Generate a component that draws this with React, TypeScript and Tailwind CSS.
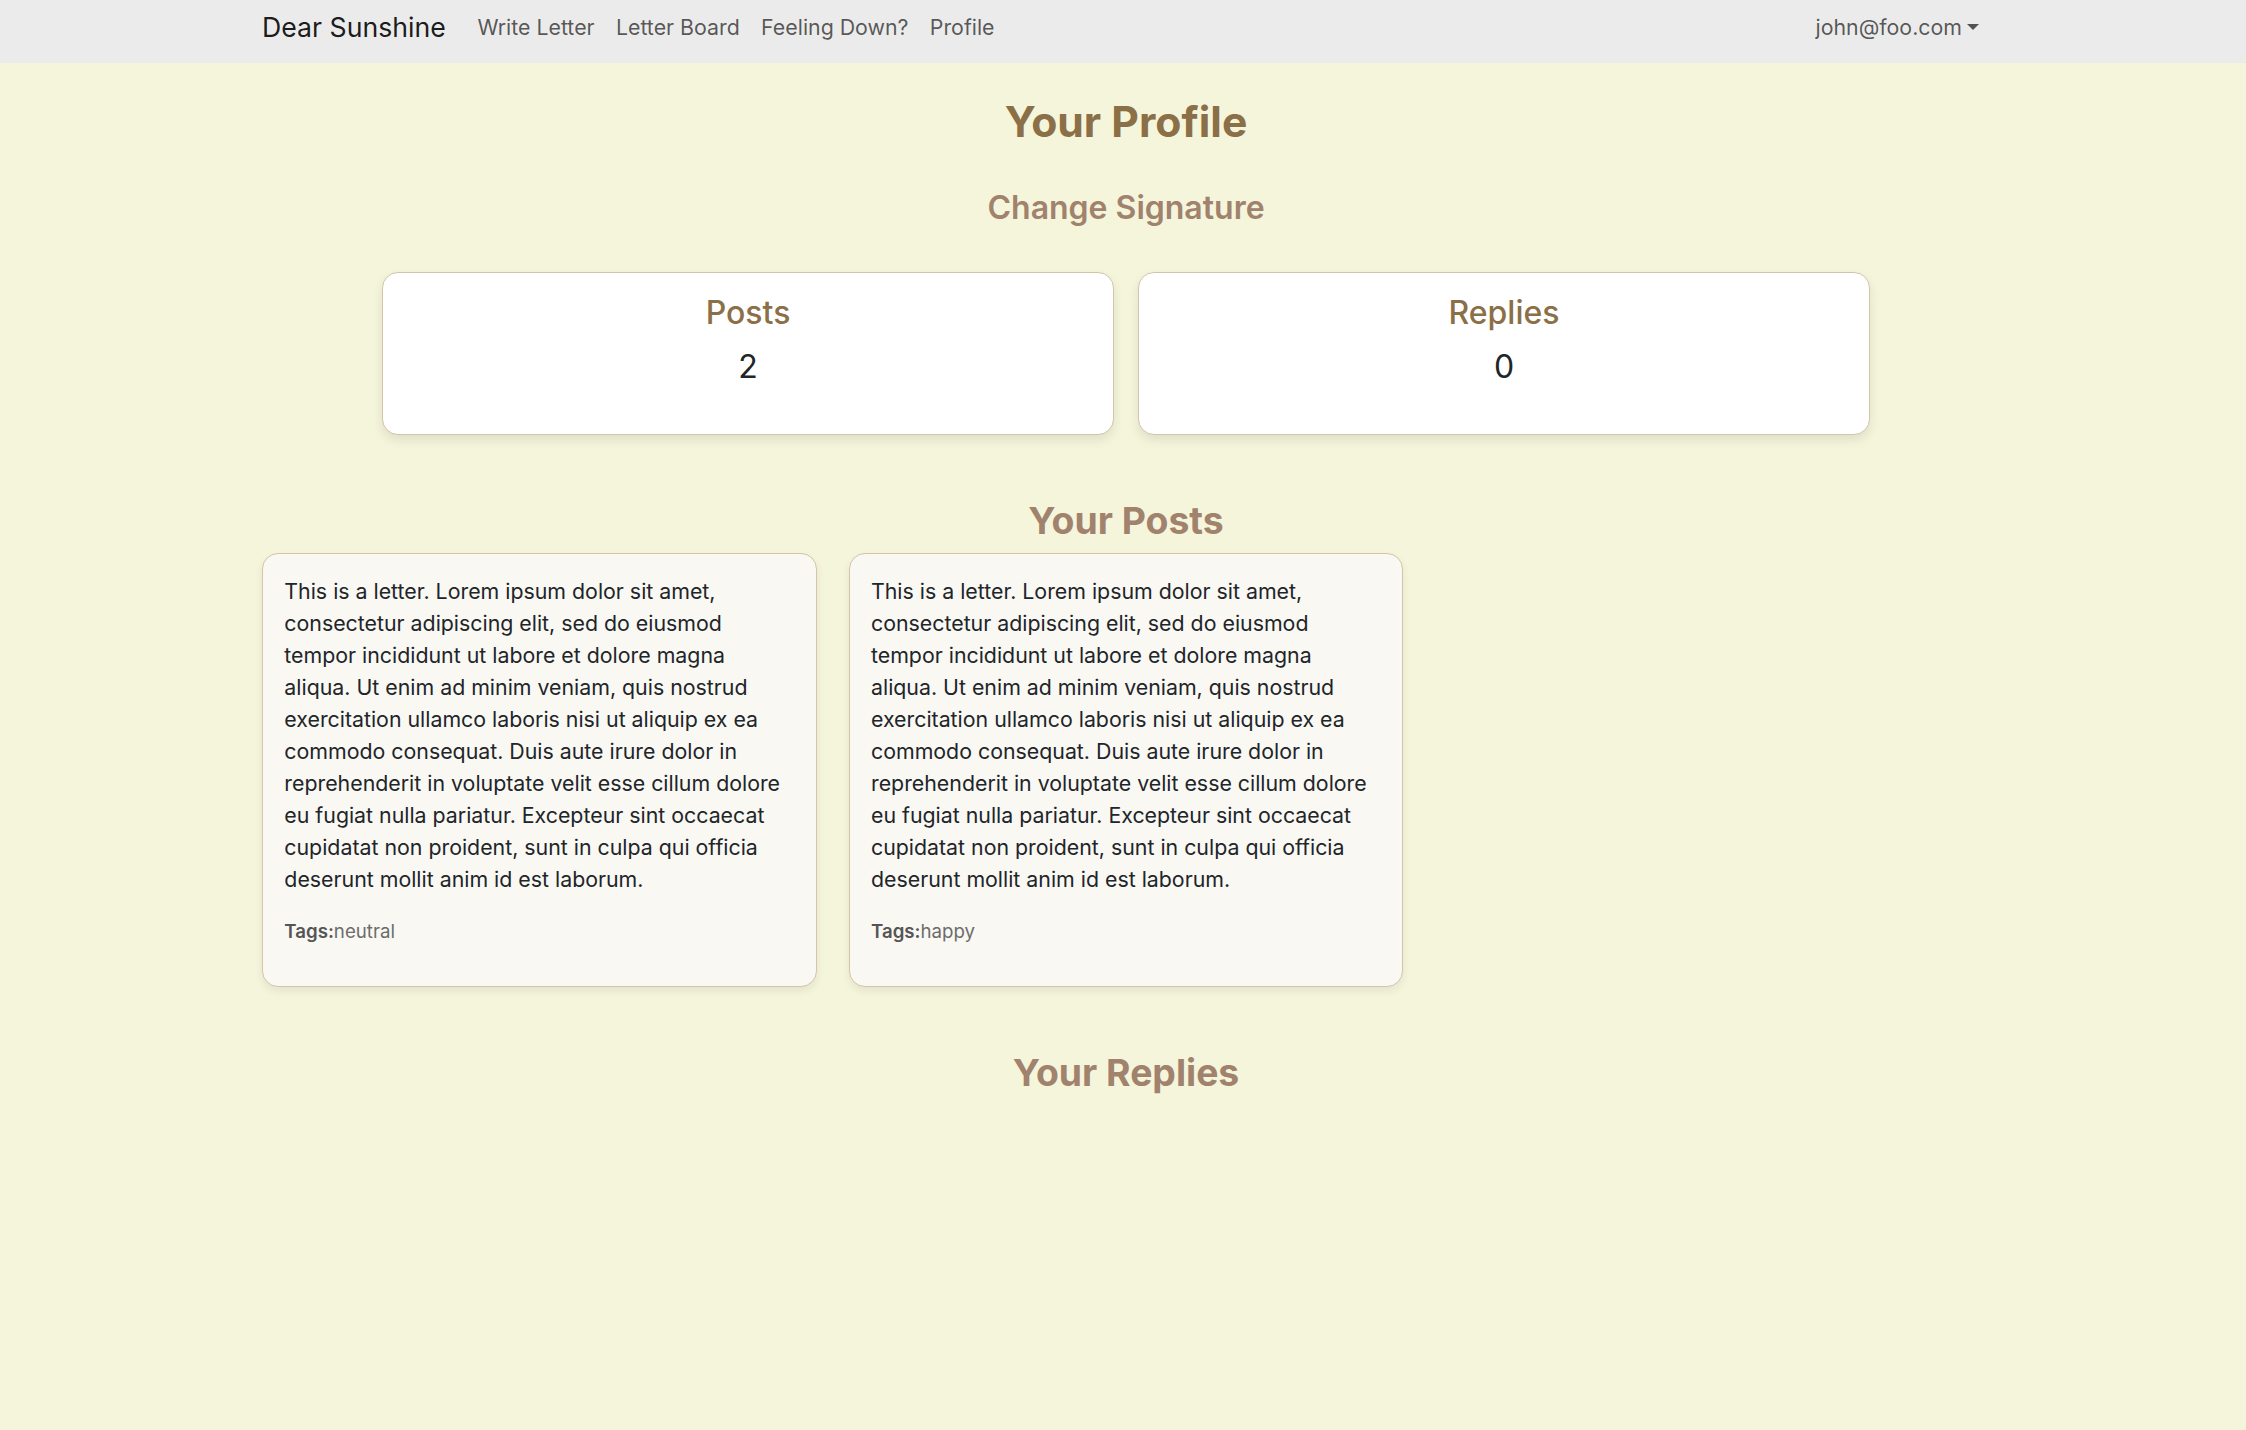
import React from 'react';

const LETTER =
  'This is a letter. Lorem ipsum dolor sit amet, consectetur adipiscing elit, sed do eiusmod tempor incididunt ut labore et dolore magna aliqua. Ut enim ad minim veniam, quis nostrud exercitation ullamco laboris nisi ut aliquip ex ea commodo consequat. Duis aute irure dolor in reprehenderit in voluptate velit esse cillum dolore eu fugiat nulla pariatur. Excepteur sint occaecat cupidatat non proident, sunt in culpa qui officia deserunt mollit anim id est laborum.';

const POSTS = [
  { id: 1, body: LETTER, tag: 'neutral' },
  { id: 2, body: LETTER, tag: 'happy' },
];

const STATS = [
  { label: 'Posts', value: 2 },
  { label: 'Replies', value: 0 },
];

function Navbar() {
  return (
    <nav className="h-[63px] bg-[#ebebeb]">
      <div className="mx-auto flex h-[53px] w-[1760px] items-center pl-[19px] pr-[13px]">
        <a className="mr-[21px] text-[26.67px] leading-[40px] text-black/90">Dear Sunshine</a>
        <ul className="flex items-center">
          {['Write Letter', 'Letter Board', 'Feeling Down?', 'Profile'].map((l) => (
            <li key={l}>
              <a className="block px-[10.67px] text-[21.33px] leading-[32px] text-black/65">{l}</a>
            </li>
          ))}
        </ul>
        <div className="ml-auto">
          <a className="flex items-center px-[10.67px] text-[21.33px] leading-[32px] text-black/65">
            john@foo.com
            {/* dropdown caret */}
            <span className="ml-[5.4px] h-0 w-0 border-x-[6.4px] border-t-[6.4px] border-x-transparent border-t-black/65" />
          </a>
        </div>
      </div>
    </nav>
  );
}

function StatCard({ label, value }: { label: string; value: number }) {
  return (
    <div className="rounded-[16px] border-[1.33px] border-[#d4c4a8] bg-white p-[21.33px] text-center shadow-[0_5px_11px_rgba(0,0,0,0.09)]">
      <h3 className="mb-[10.67px] text-[32px] font-medium leading-[38.4px] text-[#8b6f47]">{label}</h3>
      <p className="mb-[21.33px] text-[32px] leading-[48px] text-[#212529]">{value}</p>
    </div>
  );
}

function PostCard({ body, tag }: { body: string; tag: string }) {
  return (
    <div className="rounded-[16px] border-[1.33px] border-[#d4c4a8] bg-[#faf8f3] p-[21.33px] shadow-[0_4px_9px_rgba(0,0,0,0.07)]">
      <p className="mb-[23px] text-[21.33px] leading-[32px] text-[#212529]">{body}</p>
      <p className="mb-[18px] text-[18.67px] leading-[28px] text-[#6c6c6c]">
        <strong className="font-semibold text-[#555]">Tags:</strong>
        {tag}
      </p>
    </div>
  );
}

export default function App() {
  return (
    <div className="min-h-[1430px] bg-[#f5f5dc] font-['Inter','Noto_Sans',sans-serif]">
      <Navbar />
      <main className="mx-auto w-[1760px] pb-[40px] pl-[19px] pr-[13px]">
        <h1 className="mt-[33.4px] text-center text-[42.67px] font-bold leading-[51.2px] text-[#8b6f47]">
          Your Profile
        </h1>
        <h2 className="mt-[41px] text-center text-[32px] font-semibold leading-[38.4px] text-[#a0826d]">
          Change Signature
        </h2>

        <div className="mx-auto mt-[45px] grid w-[1488px] grid-cols-2 gap-[24px]">
          {STATS.map((s) => (
            <StatCard key={s.label} label={s.label} value={s.value} />
          ))}
        </div>

        <h2 className="mt-[63.5px] text-center text-[37.33px] font-bold leading-[44.8px] text-[#a0826d]">
          Your Posts
        </h2>
        <div className="mt-[9.5px] grid grid-cols-3 gap-[32px]">
          {POSTS.map((p) => (
            <PostCard key={p.id} body={p.body} tag={p.tag} />
          ))}
        </div>

        <h2 className="mt-[64px] text-center text-[37.33px] font-bold leading-[44.8px] text-[#a0826d]">
          Your Replies
        </h2>
      </main>
    </div>
  );
}
